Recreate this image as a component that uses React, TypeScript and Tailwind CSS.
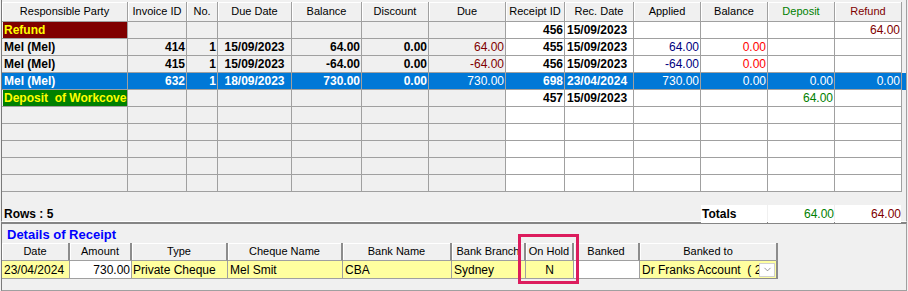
import { ChevronDown } from "lucide-react";

type Col = { align: string; weight: string; color: string };

const GRID =
  "grid grid-cols-[126px_59px_31px_74px_70px_67px_77px_59px_69px_67px_67px_67px_67px]";
const GRID2 = "grid grid-cols-[68px_62px_96px_115px_109px_74px_48px_66px_138px]";

const headers: { label: string; color?: string }[] = [
  { label: "Responsible Party" },
  { label: "Invoice ID" },
  { label: "No." },
  { label: "Due Date" },
  { label: "Balance" },
  { label: "Discount" },
  { label: "Due" },
  { label: "Receipt ID" },
  { label: "Rec. Date" },
  { label: "Applied" },
  { label: "Balance" },
  { label: "Deposit", color: "text-[#008000]" },
  { label: "Refund", color: "text-[#800000]" },
];

const cols: Col[] = [
  { align: "justify-start pl-[2px]", weight: "font-bold", color: "text-black" },
  { align: "justify-end pr-[1px]", weight: "font-bold", color: "text-black" },
  { align: "justify-end pr-[1px]", weight: "font-bold", color: "text-black" },
  { align: "justify-center", weight: "font-bold", color: "text-black" },
  { align: "justify-end pr-[1px]", weight: "font-bold", color: "text-black" },
  { align: "justify-end pr-[1px]", weight: "font-bold", color: "text-black" },
  { align: "justify-end pr-[1px]", weight: "font-normal", color: "text-[#800000]" },
  { align: "justify-end pr-[1px]", weight: "font-bold", color: "text-black" },
  { align: "justify-start pl-[2px]", weight: "font-bold", color: "text-black" },
  { align: "justify-end pr-[1px]", weight: "font-normal", color: "text-[#000080]" },
  { align: "justify-end pr-[1px]", weight: "font-normal", color: "text-[#ff0000]" },
  { align: "justify-end pr-[1px]", weight: "font-normal", color: "text-[#008000]" },
  { align: "justify-end pr-[1px]", weight: "font-normal", color: "text-[#800000]" },
];

type Row = {
  cells: string[];
  selected?: boolean;
  tag?: { text: string; bg: string };
};

const rows: Row[] = [
  {
    tag: { text: "Refund", bg: "bg-[#800000]" },
    cells: ["", "", "", "", "", "", "", "456", "15/09/2023", "", "", "", "64.00"],
  },
  {
    cells: ["Mel (Mel)", "414", "1", "15/09/2023", "64.00", "0.00", "64.00", "455", "15/09/2023", "64.00", "0.00", "", ""],
  },
  {
    cells: ["Mel (Mel)", "415", "1", "15/09/2023", "-64.00", "0.00", "-64.00", "456", "15/09/2023", "-64.00", "0.00", "", ""],
  },
  {
    selected: true,
    cells: ["Mel (Mel)", "632", "1", "18/09/2023", "730.00", "0.00", "730.00", "698", "23/04/2024", "730.00", "0.00", "0.00", "0.00"],
  },
  {
    tag: { text: "Deposit  of Workcover", bg: "bg-[#008000]" },
    cells: ["", "", "", "", "", "", "", "457", "15/09/2023", "", "", "64.00", ""],
  },
  { cells: Array(13).fill("") },
  { cells: Array(13).fill("") },
  { cells: Array(13).fill("") },
  { cells: Array(13).fill("") },
  { cells: Array(13).fill("") },
];

function GridRow({ row }: { row: Row }) {
  return (
    <div className={row.selected ? "bg-[#0078d7]" : ""}>
      <div className={GRID}>
        {row.cells.map((v, i) => {
          const c = cols[i];
          const bg = row.selected ? "bg-[#0078d7]" : i < 7 ? "bg-[#f0f0f0]" : "bg-white";
          const color = row.selected ? "text-white" : c.color;
          if (i === 0 && row.tag) {
            return (
              <div key={i} className="h-[17px] border-r border-b border-[#a0a0a0] bg-[#f0f0f0] pl-px">
                <div
                  className={`h-full ${row.tag.bg} text-[#ffff00] font-bold pl-px flex items-center overflow-hidden whitespace-pre`}
                >
                  {row.tag.text}
                </div>
              </div>
            );
          }
          return (
            <div
              key={i}
              className={`h-[17px] flex items-center overflow-hidden whitespace-nowrap border-r border-b border-[#a0a0a0] ${bg} ${c.align} ${c.weight} ${color}`}
            >
              {v}
            </div>
          );
        })}
      </div>
    </div>
  );
}

const headers2 = [
  "Date",
  "Amount",
  "Type",
  "Cheque Name",
  "Bank Name",
  "Bank Branch",
  "On Hold",
  "Banked",
  "Banked to",
];

export default function App() {
  return (
    <div className="relative w-[908px] h-[291px] bg-[#f0f0f0] font-['Liberation_Sans',Arial,sans-serif] text-[12px] text-black overflow-hidden">
      {/* Top panel: allocations grid */}
      <div className="ml-px w-[906px] h-[222px] border-l border-r border-b border-l-[#7a7a7a] border-r-[#a0a0a0] border-b-white pt-[2px]">
        <div className={GRID}>
          {headers.map((h, i) => (
            <div
              key={i}
              className={`h-[20px] flex items-center justify-center text-[11px] whitespace-nowrap overflow-hidden border-r border-b border-[#a0a0a0] bg-[#f0f0f0] shadow-[inset_1px_1px_0_#ffffff] ${h.color ?? "text-black"}`}
            >
              {h.label}
            </div>
          ))}
        </div>
        {rows.map((r, i) => (
          <GridRow key={i} row={r} />
        ))}
        <div className={`${GRID} mt-[13px] h-[13px]`}>
          <div className="col-span-10 flex items-center pl-[2px] font-bold">Rows : 5</div>
          <div className="flex items-center bg-white font-bold pl-px mr-px">Totals</div>
          <div className="flex items-center justify-end bg-white text-[#008000] mr-px">64.00</div>
          <div className="flex items-center justify-end bg-white text-[#800000] mr-px">64.00</div>
        </div>
      </div>

      {/* Bottom panel: receipt details */}
      <div className="ml-px w-[906px] h-[69px] border-l border-r border-b border-t-2 border-l-[#7a7a7a] border-r-[#a0a0a0] border-b-[#a0a0a0] border-t-[#858585]">
        <div className="h-[19px] pt-[3px] pl-[5px] text-[13px] leading-[15px] font-bold text-[#0000ff]">
          Details of Receipt
        </div>
        <div className={GRID2}>
          {headers2.map((h) => (
            <div
              key={h}
              className="h-[18px] flex items-center justify-center text-[11px] whitespace-nowrap overflow-hidden border-r-2 border-b border-r-[#8c8c8c] border-b-[#a0a0a0] bg-[#f0f0f0] shadow-[inset_1px_1px_0_#ffffff]"
            >
              {h}
            </div>
          ))}
          <div className="h-[18px] flex items-center pl-[2px] bg-[#ffff9f] border-r border-b border-[#a0a0a0]">23/04/2024</div>
          <div className="h-[18px] flex items-center justify-end pr-px bg-white border-r border-b border-[#a0a0a0]">730.00</div>
          <div className="h-[18px] flex items-center pl-px bg-[#ffff9f] border-r border-b border-[#a0a0a0]">Private Cheque</div>
          <div className="h-[18px] flex items-center pl-[2px] bg-[#ffff9f] border-r border-b border-[#a0a0a0]">Mel Smit</div>
          <div className="h-[18px] flex items-center pl-[2px] bg-[#ffff9f] border-r border-b border-[#a0a0a0]">CBA</div>
          <div className="h-[18px] flex items-center pl-[2px] bg-[#ffff9f] border-r border-b border-[#a0a0a0]">Sydney</div>
          <div className="h-[18px] flex items-center justify-center bg-[#ffff9f] border-r border-b border-[#a0a0a0]">N</div>
          <div className="h-[18px] bg-white border-r border-b border-[#a0a0a0]" />
          <div className="h-[18px] flex items-center bg-[#ffff9f] border-r-2 border-b border-r-[#8c8c8c] border-b-[#8c8c8c]">
            <span className="flex-1 pl-[2px] overflow-hidden whitespace-pre">Dr Franks Account  ( 2</span>
            <span className="w-[16px] h-[14px] mr-px flex items-center justify-center bg-white border border-[#d0d0d0]">
              <ChevronDown size={11} strokeWidth={1.4} color="#606060" />
            </span>
          </div>
        </div>
      </div>

      {/* Annotation highlight around On Hold */}
      <div className="absolute left-[518px] top-[234px] w-[61px] h-[50px] border-[3px] border-[#dc1c5d]" />
    </div>
  );
}
